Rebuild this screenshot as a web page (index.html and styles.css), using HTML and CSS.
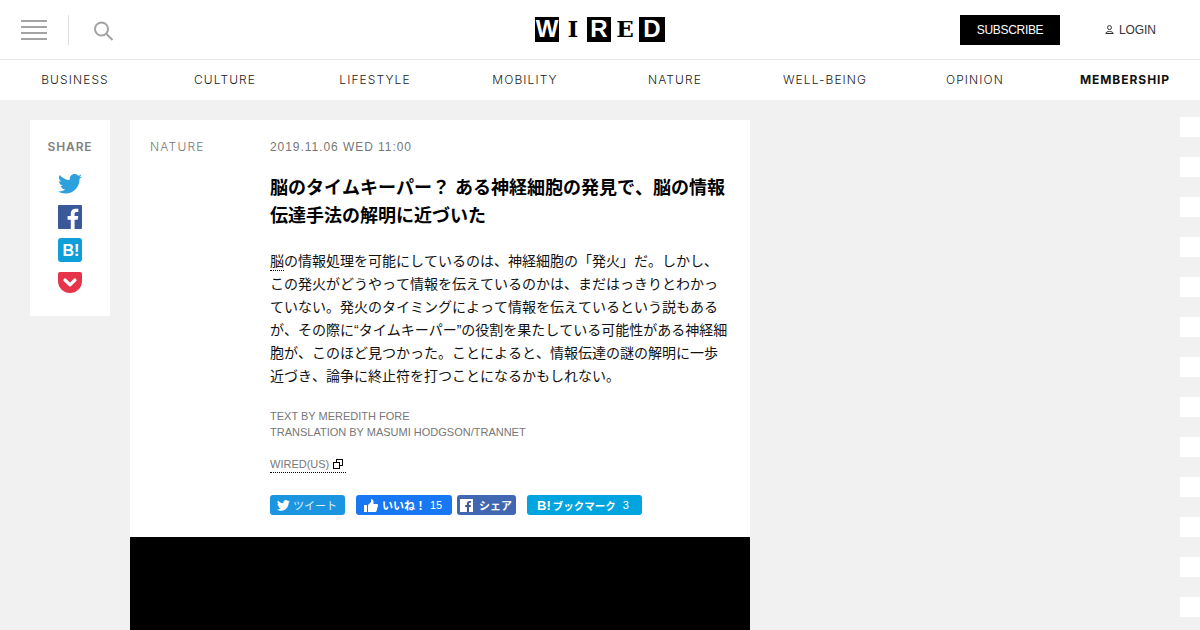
FILE: index.html
```html
<!DOCTYPE html>
<html lang="ja">
<head>
  <meta charset="UTF-8" />
  <title>WIRED.jp</title>
  <link rel="stylesheet" href="styles.css">
</head>
<body>

<header class="top-bar">
  <div class="top-left">
    <div class="burger"><span></span><span></span><span></span><span></span></div>
    <div class="top-sep"></div>
    <svg class="search-icon" width="20" height="20" viewBox="0 0 20 20" fill="none" stroke="#a2a2a2" stroke-width="2">
      <circle cx="7.5" cy="8" r="6.500"/>
      <path d="M12.500 13 L18.500 19"/>
    </svg>
  </div>
  <div class="logo">
    <span class="logo-b logo-w">W</span><span class="logo-l logo-i">I</span><span class="logo-b logo-r">R</span><span class="logo-l logo-e">E</span><span class="logo-b logo-d">D</span>
  </div>
  <div class="top-right">
    <a class="subscribe">SUBSCRIBE</a>
    <a class="login">
      <svg width="9" height="9" viewBox="0 0 9 9" fill="none" stroke="#333" stroke-width="1">
        <circle cx="4.500" cy="2.600" r="2"/>
        <path d="M.8 8.500 C1 5.800 8 5.800 8.200 8.500 Z"/>
      </svg>
      LOGIN
    </a>
  </div>
</header>

<nav class="main-nav">
  <a>BUSINESS</a>
  <a>CULTURE</a>
  <a>LIFESTYLE</a>
  <a>MOBILITY</a>
  <a>NATURE</a>
  <a>WELL-BEING</a>
  <a>OPINION</a>
  <a class="nav-strong">MEMBERSHIP</a>
</nav>

<div class="page">
  <aside class="share">
    <p class="share-title">SHARE</p>
    <svg class="share-icon share-tw" width="24" height="20" viewBox="0 0 24 20">
      <path fill="#2ca1dc" d="M24 2.400c-.9.400-1.800.6-2.800.8 1-.6 1.800-1.600 2.200-2.700-1 .6-2 1-3.100 1.200C19.300.7 18 0 16.600 0c-2.700 0-4.900 2.200-4.900 4.900 0 .4 0 .8.100 1.100C7.700 5.800 4.100 3.900 1.700.9c-.4.7-.7 1.600-.7 2.500 0 1.700.9 3.200 2.200 4.100-.8 0-1.600-.2-2.200-.6v.1c0 2.400 1.700 4.400 3.900 4.800-.4.100-.8.200-1.300.200-.3 0-.6 0-.9-.1.600 2 2.400 3.400 4.600 3.400-1.700 1.300-3.800 2.100-6.100 2.100-.4 0-.8 0-1.200-.1C2.200 18.700 4.800 19.500 7.500 19.500c9.100 0 14-7.500 14-14v-.6c1-.7 1.800-1.600 2.500-2.500z"/>
    </svg>
    <svg class="share-icon share-fb" width="24" height="24" viewBox="0 0 24 24">
      <rect width="24" height="24" rx="1" fill="#3b5998"/>
      <path fill="#fff" d="M16.600 24v-9.300h3.100l.5-3.600h-3.600V8.800c0-1 .3-1.800 1.800-1.800h1.900V3.800c-.3 0-1.500-.1-2.800-.1-2.800 0-4.700 1.700-4.700 4.800v2.600H9.600v3.600h3.200V24z"/>
    </svg>
    <svg class="share-icon" width="24" height="24" viewBox="0 0 24 24">
      <rect width="24" height="24" rx="3" fill="#0e9fd8"/>
      <text x="4.500" y="18" class="hatena-mark">B!</text>
    </svg>
    <svg class="share-icon" width="24" height="21" viewBox="0 0 24 21">
      <path fill="#e6344a" d="M2 0h20a2 2 0 0 1 2 2v7a12 12 0 0 1-24 0V2a2 2 0 0 1 2-2z"/>
      <path fill="none" stroke="#fff" stroke-width="3.200" stroke-linecap="round" stroke-linejoin="round" d="M7 8l5 4.800L17 8"/>
    </svg>
  </aside>

  <main class="column">
    <article class="article">
      <div class="category">NATURE</div>
      <div class="article-body">
        <time class="date">2019.11.06 WED 11:00</time>
        <h1 class="title">脳のタイムキーパー？ ある神経細胞の発見で、脳の情報伝達手法の解明に近づいた</h1>
        <p class="lead"><span class="term">脳</span>の情報処理を可能にしているのは、神経細胞の「発火」だ。しかし、この発火がどうやって情報を伝えているのかは、まだはっきりとわかっていない。発火のタイミングによって情報を伝えているという説もあるが、その際に“タイムキーパー”の役割を果たしている可能性がある神経細胞が、このほど見つかった。ことによると、情報伝達の謎の解明に一歩近づき、論争に終止符を打つことになるかもしれない。</p>
        <p class="credit">TEXT BY MEREDITH FORE<br>TRANSLATION BY MASUMI HODGSON/TRANNET</p>
        <a class="source">WIRED(US)
          <svg width="10" height="10" viewBox="0 0 10 10" fill="none" stroke="#000" stroke-width="1">
            <rect x="3.500" y=".5" width="6" height="6" fill="#fff"/>
            <rect x=".5" y="3.500" width="6" height="6" fill="#fff"/>
          </svg>
        </a>
        <div class="social">
          <a class="btn btn-tweet">
            <svg width="13" height="11" viewBox="0 0 24 20"><path fill="#fff" d="M24 2.400c-.9.400-1.800.6-2.800.8 1-.6 1.800-1.600 2.200-2.700-1 .6-2 1-3.100 1.200C19.300.7 18 0 16.600 0c-2.700 0-4.900 2.200-4.900 4.900 0 .4 0 .8.100 1.100C7.700 5.800 4.100 3.900 1.700.9c-.4.7-.7 1.600-.7 2.500 0 1.700.9 3.200 2.200 4.100-.8 0-1.600-.2-2.200-.6v.1c0 2.400 1.700 4.400 3.900 4.800-.8.200-1.500.2-2.200.1.600 2 2.400 3.400 4.600 3.400-2.100 1.700-4.700 2.400-7.300 2 2.200 1.600 4.800 2.200 7.500 2.200 9.100 0 14-7.500 14-14v-.6c1-.7 1.800-1.600 2.500-2.500z"/></svg>
            <span class="tweet-label">ツイート</span>
          </a>
          <a class="btn btn-like">
            <svg width="14" height="13" viewBox="0 0 14 13"><path fill="#fff" d="M0 6h3v7H0zM4 6l3-3V0c1.500 0 2.500 1 2.500 2.500V5H13c.8 0 1.200.8 1 1.500l-1.500 5.500c-.2.600-.6 1-1.200 1H4z"/></svg>
            <b>いいね！</b><span class="count count-like">15</span>
          </a>
          <a class="btn btn-fb">
            <span class="fb-box"><svg width="13" height="13" viewBox="0 0 24 24"><rect width="24" height="24" fill="#fff"/><path fill="#3b5998" d="M16.600 24v-9.300h3.100l.5-3.600h-3.600V8.800c0-1 .3-1.800 1.800-1.800h1.900V3.800c-.3 0-1.500-.1-2.800-.1-2.800 0-4.700 1.700-4.700 4.800v2.600H9.600v3.600h3.200V24z"/></svg></span>
            <b>シェア</b>
          </a>
          <a class="btn btn-hatena">
            <b class="btn-b">B!</b><b class="hatena-label">ブックマーク</b><span class="count">3</span>
          </a>
        </div>
      </div>
    </article>
    <div class="video"></div>
  </main>

  <div class="side-strip"></div>
</div>

</body>
</html>
```

FILE: styles.css
```css
* {
  margin: 0;
  padding: 0;
  box-sizing: border-box;
}

html, body {
  height: 630px;
  overflow: hidden;
}

body {
  background-color: #f1f1f1;
  font-family: "Liberation Sans", "Noto Sans CJK JP", sans-serif;
  color: #000;
}

/* header */
.top-bar {
  height: 60px;
  background-color: #fff;
  border-bottom: 1px solid #e6e6e6;
  display: flex;
  align-items: center;
  justify-content: space-between;
  padding: 0 0 0 21px;
  position: relative;
}

.top-left {
  display: flex;
  align-items: center;
}

.burger {
  width: 26px;
  display: flex;
  flex-direction: column;
  gap: 4px;
}

.burger span {
  display: block;
  height: 2px;
  background-color: #a4a4a4;
}

.top-sep {
  width: 1px;
  height: 30px;
  background-color: #dedede;
  margin: 0 25px 0 21px;
}

.search-icon {
  display: block;
  margin-top: 2px;
}

.logo {
  display: flex;
  width: 130px;
  height: 25px;
  font-family: "Liberation Sans", sans-serif;
  font-weight: bold;
  font-size: 24px;
  line-height: 24px;
  text-align: center;
  position: absolute;
  left: 535px;
  top: 17px;
}

.logo-b {
  width: 24px;
  background-color: #000;
  color: #fff;
}

.logo-d {
  width: 26px;
}

.logo-l {
  width: 28px;
  font-family: "DejaVu Serif", serif;
  font-size: 23px;
  color: #000;
}

.top-right {
  display: flex;
  align-items: center;
}

.subscribe {
  width: 100px;
  height: 30px;
  line-height: 30px;
  background-color: #000;
  color: #fff;
  font-size: 12px;
  letter-spacing: -.3px;
  text-align: center;
}

.login {
  width: 140px;
  padding-left: 45px;
  display: flex;
  align-items: center;
  gap: 5px;
  font-size: 12px;
  letter-spacing: -.1px;
  color: #333;
}

/* nav */
.main-nav {
  height: 40px;
  padding-bottom: 1px;
  background-color: #fff;
  display: grid;
  grid-template-columns: repeat(8, 150px);
  align-items: center;
  text-align: center;
  font-family: "Inter", sans-serif;
  font-size: 12px;
  font-weight: 300;
  letter-spacing: 1.1px;
  color: #222;
}

.nav-strong {
  font-weight: bold;
  letter-spacing: .95px;
  color: #111;
}

/* page */
.page {
  display: flex;
  align-items: flex-start;
  padding: 20px 0 0 30px;
  height: 530px;
}

.share {
  width: 80px;
  height: 196px;
  background-color: #fff;
  display: flex;
  flex-direction: column;
  align-items: center;
  padding-top: 20px;
  margin-right: 20px;
}

.share-title {
  font-family: "Inter", sans-serif;
  font-size: 12px;
  font-weight: 600;
  line-height: 14px;
  letter-spacing: .9px;
  color: #808080;
  margin-bottom: 20px;
}

.share-icon {
  display: block;
  margin-bottom: 10px;
}

.share-tw {
  margin-bottom: 11px;
}

.share-fb {
  margin-bottom: 9px;
}

.hatena-mark {
  font-family: "Liberation Sans", sans-serif;
  font-size: 16px;
  font-weight: bold;
  fill: #fff;
}

.column {
  width: 620px;
}

.article {
  background-color: #fff;
  height: 417px;
  padding: 20px;
  display: flex;
}

.category {
  width: 120px;
  flex-shrink: 0;
  font-family: "Inter", sans-serif;
  font-size: 12px;
  font-weight: 300;
  line-height: 14px;
  letter-spacing: 1.2px;
  color: #777;
}

.article-body {
  width: 460px;
}

.date {
  display: block;
  font-size: 12px;
  line-height: 14px;
  letter-spacing: .95px;
  color: #777;
}

.title {
  font-size: 18px;
  line-height: 28px;
  font-weight: bold;
  margin-top: 20px;
  font-kerning: none;
  text-spacing-trim: space-all;
}

.lead {
  font-size: 14px;
  line-height: 23px;
  margin-top: 20px;
  color: #111;
  font-kerning: none;
  text-spacing-trim: space-all;
}

.term {
  border-bottom: 1px dotted #000;
  padding-bottom: 1px;
}

.credit {
  font-size: 11px;
  line-height: 16px;
  color: #777;
  margin-top: 20px;
}

.source {
  display: inline-flex;
  align-items: center;
  gap: 4px;
  font-size: 11px;
  line-height: 14px;
  color: #777;
  border-bottom: 1px dotted #000;
  padding-bottom: 1px;
  margin-top: 17px;
  padding-right: 3px;
}

.social {
  display: flex;
  margin-top: 22px;
}

.btn {
  height: 20px;
  border-radius: 3px;
  display: flex;
  align-items: center;
  color: #fff;
  font-size: 11px;
  white-space: nowrap;
  font-kerning: none;
}

.tweet-label {
  opacity: .85;
}

.count {
  font-weight: normal;
  margin-left: 7px;
}

.count-like {
  margin-left: 0;
}

.btn-tweet {
  width: 75px;
  background-color: #1b95e0;
  padding-left: 7px;
  gap: 3px;
  margin-right: 11px;
}

.btn-like {
  width: 96px;
  background-color: #1877f2;
  padding-left: 8px;
  gap: 4px;
  margin-right: 5px;
}

.btn-fb {
  width: 59px;
  background-color: #4267b2;
  padding-left: 3px;
  gap: 6px;
  margin-right: 11px;
}

.fb-box {
  display: flex;
}

.btn-hatena {
  width: 115px;
  background-color: #00a4de;
  padding-left: 10px;
}

.btn-b {
  font-size: 13px;
  margin-right: 2px;
}

.hatena-label {
  font-size: 10.5px;
}

.video {
  height: 93px;
  background-color: #000;
}

/* white blocks running down the right edge */
.side-strip {
  width: 20px;
  height: 513px;
  margin-left: auto;
  margin-top: -3px;
  background-image: repeating-linear-gradient(to bottom, #fff 0, #fff 20px, transparent 20px, transparent 40px);
}
```
